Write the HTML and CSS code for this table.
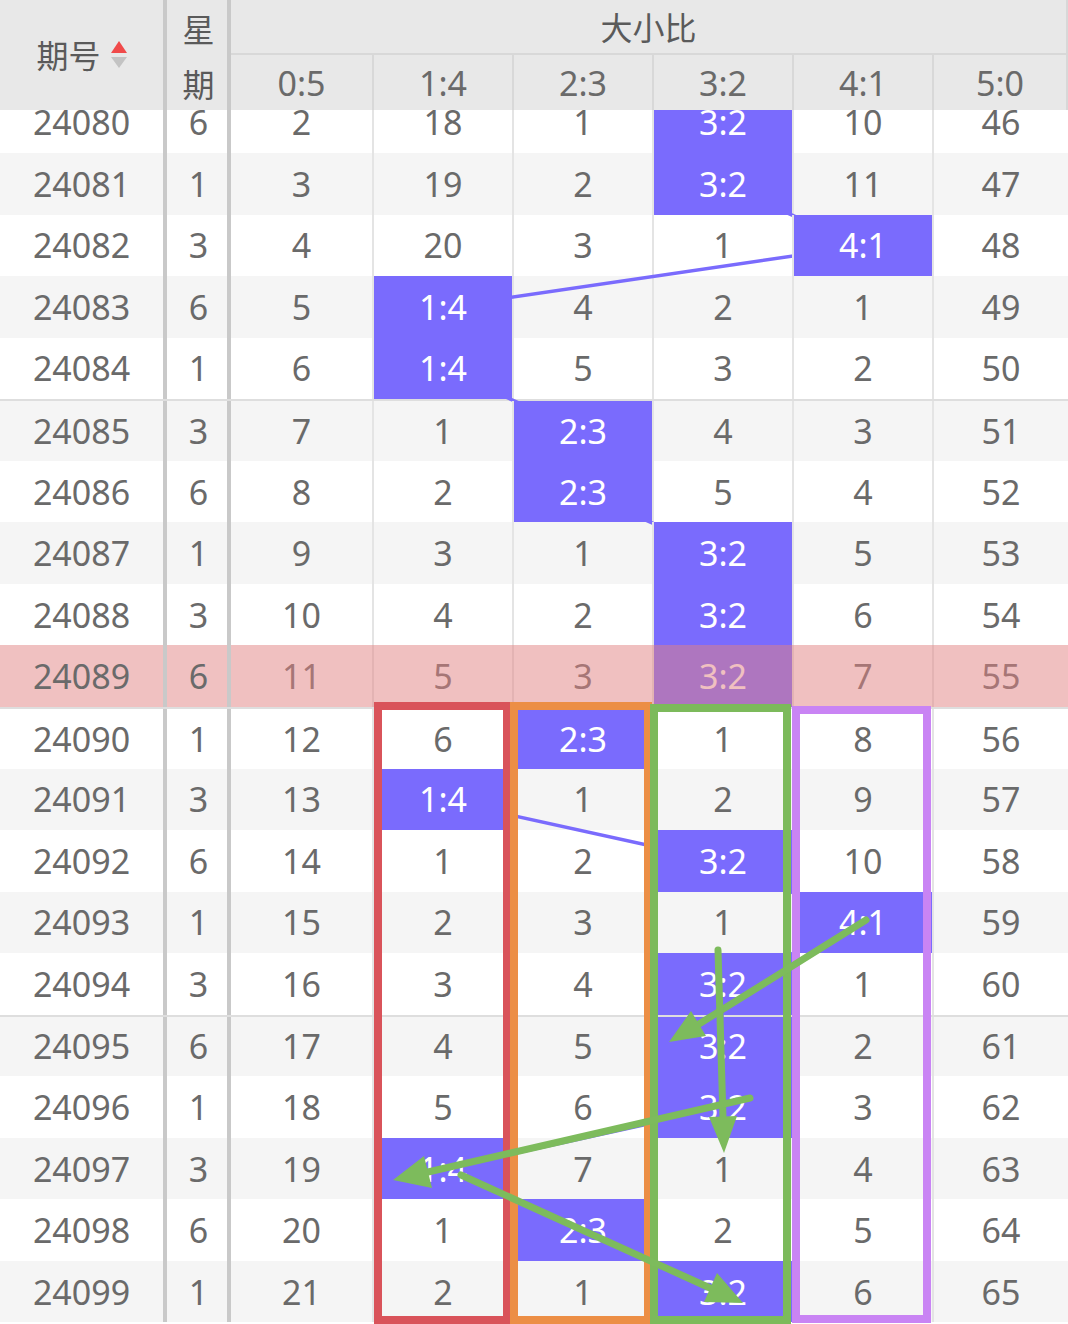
FILE: index.html
```html
<!DOCTYPE html>
<html lang="zh">
<head>
<meta charset="utf-8">
<title>大小比走势</title>
<link rel="stylesheet" href="styles.css">
</head>
<body>
<div class="board">
  <div class="head">
    <div class="h-qh">期号<span class="sort"><i class="up"></i><i class="down"></i></span></div>
    <div class="dv"></div>
    <div class="h-xq"><span>星</span><span>期</span></div>
    <div class="dv"></div>
    <div class="h-group">
      <div class="h-title">大小比</div>
      <div class="h-sub"><div>0:5</div><div>1:4</div><div>2:3</div><div>3:2</div><div>4:1</div><div>5:0</div></div>
    </div>
  </div>
  <div class="viewport">
    <div class="rows">
      <svg class="trend" width="1068" height="1232" viewBox="0 0 1068 1232">
        <polyline points="722,30.8 722,92.3 862,153.9 442,215.5 442,277 582,338.6 582,400.1 722,461.7 722,523.3 722,584.8 582,646.4 442,708 722,769.5 862,831.1 722,892.6 722,954.2 722,1015.7 442,1077.3 582,1138.9 722,1200.4" fill="none" stroke="#7a6bfd" stroke-width="3.5" stroke-linejoin="round"/>
      </svg>
      <div class="row"><div class="c qh">24080</div><div class="dv"></div><div class="c xq">6</div><div class="dv"></div><div class="c">2</div><div class="c d">18</div><div class="c d">1</div><div class="c d on">3:2</div><div class="c d">10</div><div class="c d">46</div></div>
      <div class="row alt"><div class="c qh">24081</div><div class="dv"></div><div class="c xq">1</div><div class="dv"></div><div class="c">3</div><div class="c d">19</div><div class="c d">2</div><div class="c d on">3:2</div><div class="c d">11</div><div class="c d">47</div></div>
      <div class="row"><div class="c qh">24082</div><div class="dv"></div><div class="c xq">3</div><div class="dv"></div><div class="c">4</div><div class="c d">20</div><div class="c d">3</div><div class="c d">1</div><div class="c d on">4:1</div><div class="c d">48</div></div>
      <div class="row alt"><div class="c qh">24083</div><div class="dv"></div><div class="c xq">6</div><div class="dv"></div><div class="c">5</div><div class="c d on">1:4</div><div class="c d">4</div><div class="c d">2</div><div class="c d">1</div><div class="c d">49</div></div>
      <div class="row"><div class="c qh">24084</div><div class="dv"></div><div class="c xq">1</div><div class="dv"></div><div class="c">6</div><div class="c d on">1:4</div><div class="c d">5</div><div class="c d">3</div><div class="c d">2</div><div class="c d">50</div></div>
      <div class="row alt grp"><div class="c qh">24085</div><div class="dv"></div><div class="c xq">3</div><div class="dv"></div><div class="c">7</div><div class="c d">1</div><div class="c d on">2:3</div><div class="c d">4</div><div class="c d">3</div><div class="c d">51</div></div>
      <div class="row"><div class="c qh">24086</div><div class="dv"></div><div class="c xq">6</div><div class="dv"></div><div class="c">8</div><div class="c d">2</div><div class="c d on">2:3</div><div class="c d">5</div><div class="c d">4</div><div class="c d">52</div></div>
      <div class="row alt"><div class="c qh">24087</div><div class="dv"></div><div class="c xq">1</div><div class="dv"></div><div class="c">9</div><div class="c d">3</div><div class="c d">1</div><div class="c d on">3:2</div><div class="c d">5</div><div class="c d">53</div></div>
      <div class="row"><div class="c qh">24088</div><div class="dv"></div><div class="c xq">3</div><div class="dv"></div><div class="c">10</div><div class="c d">4</div><div class="c d">2</div><div class="c d on">3:2</div><div class="c d">6</div><div class="c d">54</div></div>
      <div class="row hot"><div class="c qh">24089</div><div class="dv"></div><div class="c xq">6</div><div class="dv"></div><div class="c">11</div><div class="c d">5</div><div class="c d">3</div><div class="c d on">3:2</div><div class="c d">7</div><div class="c d">55</div></div>
      <div class="row grp"><div class="c qh">24090</div><div class="dv"></div><div class="c xq">1</div><div class="dv"></div><div class="c">12</div><div class="c d">6</div><div class="c d on">2:3</div><div class="c d">1</div><div class="c d">8</div><div class="c d">56</div></div>
      <div class="row alt"><div class="c qh">24091</div><div class="dv"></div><div class="c xq">3</div><div class="dv"></div><div class="c">13</div><div class="c d on">1:4</div><div class="c d">1</div><div class="c d">2</div><div class="c d">9</div><div class="c d">57</div></div>
      <div class="row"><div class="c qh">24092</div><div class="dv"></div><div class="c xq">6</div><div class="dv"></div><div class="c">14</div><div class="c d">1</div><div class="c d">2</div><div class="c d on">3:2</div><div class="c d">10</div><div class="c d">58</div></div>
      <div class="row alt"><div class="c qh">24093</div><div class="dv"></div><div class="c xq">1</div><div class="dv"></div><div class="c">15</div><div class="c d">2</div><div class="c d">3</div><div class="c d">1</div><div class="c d on">4:1</div><div class="c d">59</div></div>
      <div class="row"><div class="c qh">24094</div><div class="dv"></div><div class="c xq">3</div><div class="dv"></div><div class="c">16</div><div class="c d">3</div><div class="c d">4</div><div class="c d on">3:2</div><div class="c d">1</div><div class="c d">60</div></div>
      <div class="row alt grp"><div class="c qh">24095</div><div class="dv"></div><div class="c xq">6</div><div class="dv"></div><div class="c">17</div><div class="c d">4</div><div class="c d">5</div><div class="c d on">3:2</div><div class="c d">2</div><div class="c d">61</div></div>
      <div class="row"><div class="c qh">24096</div><div class="dv"></div><div class="c xq">1</div><div class="dv"></div><div class="c">18</div><div class="c d">5</div><div class="c d">6</div><div class="c d on">3:2</div><div class="c d">3</div><div class="c d">62</div></div>
      <div class="row alt"><div class="c qh">24097</div><div class="dv"></div><div class="c xq">3</div><div class="dv"></div><div class="c">19</div><div class="c d on">1:4</div><div class="c d">7</div><div class="c d">1</div><div class="c d">4</div><div class="c d">63</div></div>
      <div class="row"><div class="c qh">24098</div><div class="dv"></div><div class="c xq">6</div><div class="dv"></div><div class="c">20</div><div class="c d">1</div><div class="c d on">2:3</div><div class="c d">2</div><div class="c d">5</div><div class="c d">64</div></div>
      <div class="row alt"><div class="c qh">24099</div><div class="dv"></div><div class="c xq">1</div><div class="dv"></div><div class="c">21</div><div class="c d">2</div><div class="c d">1</div><div class="c d on">3:2</div><div class="c d">6</div><div class="c d">65</div></div>
    </div>
  </div>

  <div class="box box-red"></div>
  <div class="box box-orange"></div>
  <div class="box box-green"></div>
  <div class="box box-violet"></div>

  <svg class="arrows" width="1068" height="1324" viewBox="0 0 1068 1324">
    <g stroke="#7dbb5c" stroke-width="7" stroke-linecap="round" fill="none">
      <line x1="866" y1="920" x2="699" y2="1024"/>
      <line x1="718" y1="950" x2="723" y2="1118"/>
      <line x1="750" y1="1098" x2="428" y2="1172"/>
      <line x1="461" y1="1175" x2="710" y2="1288"/>
    </g>
    <g fill="#7dbb5c">
      <polygon points="669,1042 706,1036 691,1011"/>
      <polygon points="724,1153 737,1116 709,1117"/>
      <polygon points="393,1180 432,1188 424,1156"/>
      <polygon points="743,1303 704,1302 717,1273"/>
    </g>
  </svg>
</div>
</body>
</html>
```

FILE: styles.css
```css
* { box-sizing: border-box; }

body {
  margin: 0;
  background: #fff;
  font-family: "Noto Sans", "Noto Sans CJK SC", sans-serif;
  color: #666;
}

.board {
  position: relative;
  width: 1068px;
  height: 1324px;
  overflow: hidden;
}

/* ---------- header ---------- */
.head {
  display: grid;
  grid-template-columns: 163px 4px 60px 4px 837px;
  height: 110px;
  background: #e8e8e8;
}

.dv { background: #c9c9c9; }

.h-qh {
  display: flex;
  align-items: center;
  justify-content: center;
  font-family: "Noto Sans CJK SC", sans-serif;
  font-size: 32px;
  color: #5a5a5a;
  padding-bottom: 2px;
}

.sort {
  display: flex;
  flex-direction: column;
  align-items: center;
  gap: 4px;
  margin-left: 10px;
}

.sort i {
  display: block;
  width: 0;
  height: 0;
  border-left: 8px solid transparent;
  border-right: 8px solid transparent;
}

.sort .up { border-bottom: 12px solid #f04a4a; }
.sort .down { border-top: 11px solid #c3c3c3; }

.h-xq {
  display: flex;
  flex-direction: column;
  font-family: "Noto Sans CJK SC", sans-serif;
  font-size: 32px;
  color: #5a5a5a;
  padding-left: 3px;
}

.h-xq span {
  height: 55px;
  display: flex;
  align-items: center;
  justify-content: center;
}

.h-group {
  display: grid;
  grid-template-rows: 55px 55px;
  border-right: 2px solid #d8d8d8;
}

.h-title {
  display: flex;
  align-items: center;
  justify-content: center;
  border-bottom: 2px solid #d8d8d8;
  font-family: "Noto Sans CJK SC", sans-serif;
  font-size: 32px;
  color: #5a5a5a;
  padding-bottom: 2px;
}

.h-sub {
  display: grid;
  grid-template-columns: 141px 140px 140px 140px 140px 1fr;
}

.h-sub div {
  display: flex;
  align-items: center;
  justify-content: center;
  font-size: 34px;
  color: #6a6a6a;
}

.h-sub div + div { border-left: 2px solid #d8d8d8; }

/* ---------- body ---------- */
.viewport {
  height: 1214px;
  overflow: hidden;
}

.rows {
  position: relative;
  margin-top: -18.5px;
}

.trend {
  position: absolute;
  left: 0;
  top: 0;
  z-index: 1;
  pointer-events: none;
}

.row {
  position: relative;
  display: grid;
  grid-template-columns: 163px 4px 60px 4px 141px 140px 140px 140px 140px 136px;
  height: 61.56px;
  background: #fff;
}

.row.alt { background: #f5f5f5; }

.row.grp { border-top: 2px solid #dedede; }

.c {
  display: flex;
  align-items: center;
  justify-content: center;
  font-size: 34px;
  line-height: 1;
  color: #6a6a6a;
}

.c.xq { padding-left: 3px; }

.c.d { border-left: 2px solid #e4e4e4; }

.c.on {
  position: relative;
  z-index: 2;
  background: #7a6bfd;
  background-clip: padding-box;
  color: #fff;
}

.row.hot .qh,
.row.hot .xq { background: #f0c1c1; }

.row.hot::after {
  content: "";
  position: absolute;
  left: 231px;
  right: 0;
  top: 0;
  bottom: 0;
  background: rgba(226, 130, 130, 0.5);
  z-index: 3;
}

/* ---------- marker boxes ---------- */
.box {
  position: absolute;
  top: 702px;
  height: 622px;
  border: 8px solid;
  z-index: 4;
}

.box-red { left: 374px; width: 137px; border-color: #d9535a; }
.box-orange { left: 510px; width: 142px; border-color: #ec8e45; }
.box-green { left: 650px; width: 141px; top: 704px; height: 620px; border-color: #7cba5b; }
.box-violet { left: 792px; width: 139px; top: 706px; height: 617px; border-color: #c984f4; }

.arrows {
  position: absolute;
  left: 0;
  top: 0;
  z-index: 5;
  pointer-events: none;
}
```
